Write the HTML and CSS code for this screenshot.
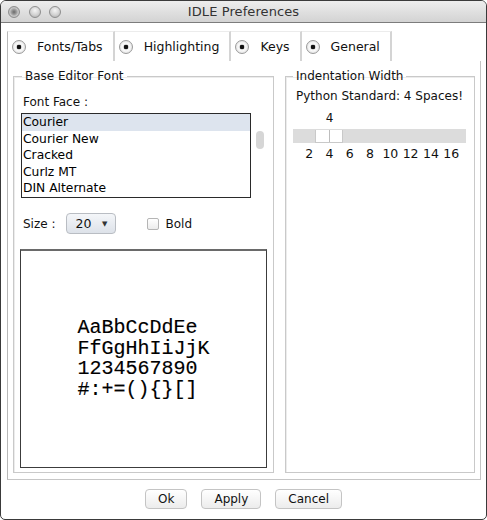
FILE: index.html
```html
<!DOCTYPE html>
<html>
<head>
<meta charset="utf-8">
<title>IDLE Preferences</title>
<link rel="stylesheet" href="styles.css">
</head>
<body>
<div class="window">
  <div class="titlebar">
    <div class="lights"><span class="light close"></span><span class="light"></span><span class="light"></span></div>
    <div class="title">IDLE Preferences</div>
    <div></div>
  </div>
  <div class="tabs">
    <div class="tab selected"><span class="radio"></span>Fonts/Tabs</div>
    <div class="tab"><span class="radio"></span>Highlighting</div>
    <div class="tab"><span class="radio"></span>Keys</div>
    <div class="tab"><span class="radio"></span>General</div>
  </div>
  <div class="panel">
    <fieldset class="group font-group">
      <legend>Base Editor Font</legend>
      <div class="label">Font Face :</div>
      <div class="list-wrap">
        <ul class="list">
          <li class="sel">Courier</li>
          <li>Courier New</li>
          <li>Cracked</li>
          <li>Curlz MT</li>
          <li>DIN Alternate</li>
        </ul>
        <div class="scroll-thumb"></div>
      </div>
      <div class="size-row">
        <span class="size-label">Size :</span>
        <div class="select"><span>20</span><span class="arrow">▼</span></div>
        <span class="check"></span><span class="check-label">Bold</span>
      </div>
      <div class="sample">
        <div class="sample-text">
          <div class="sample-line">AaBbCcDdEe</div>
          <div class="sample-line">FfGgHhIiJjK</div>
          <div class="sample-line">1234567890</div>
          <div class="sample-line">#:+=(){}[]</div>
        </div>
      </div>
    </fieldset>
    <fieldset class="group indent-group">
      <legend>Indentation Width</legend>
      <div class="note">Python Standard: 4 Spaces!</div>
      <div class="scale-grid value-row"><span class="value">4</span></div>
      <div class="track"><div class="thumb"></div></div>
      <div class="scale-grid ticks"><span>2</span><span>4</span><span>6</span><span>8</span><span>10</span><span>12</span><span>14</span><span>16</span></div>
    </fieldset>
  </div>
  <div class="buttons">
    <button class="btn">Ok</button>
    <button class="btn">Apply</button>
    <button class="btn">Cancel</button>
  </div>
</div>
</body>
</html>
```

FILE: styles.css
```css
* { box-sizing: border-box; }
html, body { margin: 0; padding: 0; background: #fff; }
body {
  font-family: "DejaVu Sans", "Liberation Sans", sans-serif;
  font-size: 12px;
  line-height: 14px;
  color: #111;
}
.window {
  width: 487px;
  height: 520px;
  border: 1px solid #3a3a3a;
  border-radius: 6px 6px 5px 5px;
  overflow: hidden;
  display: flex;
  flex-direction: column;
  background: #fff;
}
.titlebar {
  height: 22px;
  flex: none;
  display: grid;
  grid-template-columns: 1fr auto 1fr;
  align-items: center;
  background: linear-gradient(#ededed, #d3d3d3);
  border-bottom: 1px solid #7c7c7c;
}
.lights { display: flex; gap: 8.5px; padding-left: 7px; }
.light {
  width: 12px; height: 12px; border-radius: 50%;
  border: 1px solid #8e8e8e;
  background: radial-gradient(circle at 50% 35%, #f4f4f4 0%, #d2d2d2 55%, #a9a9a9 100%);
}
.light.close {
  background: radial-gradient(circle at 50% 50%, #6a6a6a 0%, #9a9a9a 35%, #c8c8c8 60%, #a0a0a0 100%);
}
.title { font-size: 13px; color: #333; letter-spacing: 0.1px; }

.tabs {
  flex: none;
  margin: 8px 0 0 6px;
  height: 30px;
  display: flex;
}
.tab {
  display: flex;
  align-items: center;
  gap: 11px;
  padding: 0 10px 0 4px;
  font-size: 12.5px;
  color: #111;
  border-right: 2px solid #d4d4d4;
  border-top: 1px solid #ececec;
  background: #fff;
}
.tab.selected { border-left: 1px solid #b8b8b8; }
.radio {
  width: 14px; height: 14px; border-radius: 50%;
  border: 1px solid #9a9a9a;
  background: radial-gradient(circle, #111 0 2px, #e6e6e6 2.6px, #fafafa 45%, #cfcfcf 100%);
  flex: none;
}

.panel {
  flex: none;
  margin: 0 5px 0 6px;
  padding: 8px 5px 6px 5px;
  border-left: 1px solid #b8b8b8;
  border-right: 1px solid #c4c4c4;
  border-bottom: 1px solid #c6c6c6;
  display: grid;
  grid-template-columns: 261px 190px;
  column-gap: 11px;
}
.group {
  margin: 0;
  min-width: 0;
  border: 1px solid #c9c9c9;
  box-shadow: inset 1px 1px 0 #ececec;
  padding: 0 6px 4px 6px;
}
.group legend {
  padding: 0 3px;
  font-size: 12px;
  line-height: 14px;
  color: #111;
}
.font-group legend { margin-left: 2px; }
.indent-group { padding: 0 7px 4px 7px; }

.label { margin: 12px 0 0 3px; }
.list-wrap { display: flex; margin-top: 4px; margin-left: 1px; }
.list {
  list-style: none;
  margin: 0;
  padding: 0;
  width: 230px;
  height: 85px;
  border: 1px solid #2a2a2a;
  overflow: hidden;
  background: #fff;
}
.list li { height: 16.6px; line-height: 16.6px; padding-left: 1px; font-size: 12.3px; color: #000; }
.list li.sel { background: #dde4ee; }
.scroll-thumb {
  width: 8px; height: 18px;
  margin: 18px 0 0 5px;
  border-radius: 4px;
  background: #d6d6d6;
}

.size-row {
  display: flex;
  align-items: center;
  margin: 15px 0 0 3px;
  height: 21px;
}
.select {
  margin-left: 10px;
  width: 50px; height: 21px;
  border: 1px solid #b9bdc3;
  border-radius: 4px;
  background: linear-gradient(#f4f6f9, #dde2e9);
  display: flex;
  align-items: center;
  justify-content: space-between;
  padding: 0 7px 0 9px;
  font-size: 12.5px;
}
.arrow { font-size: 7px; color: #333; }
.check {
  margin-left: 31px;
  width: 12px; height: 12px;
  border: 1px solid #b5b5b5;
  border-radius: 2px;
  background: linear-gradient(#fff, #ececec);
}
.check-label { margin-left: 7px; }

.sample {
  margin-top: 15px;
  height: 219px;
  border: 1px solid #3c3c3c;
  border-top: 2px solid #6a6a6a;
  display: flex;
  align-items: center;
  justify-content: center;
  background: #fff;
}
.sample-text {
  font-family: "Liberation Mono", "Courier New", monospace;
  font-size: 20px;
  color: #000;
  -webkit-text-stroke: 0.15px #000;
}
.sample-line { height: 20.5px; line-height: 20.5px; }

.note { margin: 6px 0 0 3px; }
.scale-grid {
  display: grid;
  grid-template-columns: repeat(8, 20.3px);
  margin-left: 6px;
  text-align: center;
}
.value-row { margin-top: 8px; }
.value { grid-column: 2; }
.track {
  margin-top: 4px;
  width: 173px;
  height: 14px;
  background: #dcdcdc;
  display: flex;
  align-items: flex-end;
}
.thumb {
  margin-left: 22px;
  width: 28px; height: 13px;
  border: 1px solid #c9c9c9;
  border-top: none;
  background: linear-gradient(to right, #fff 13px, #bdbdbd 13px, #bdbdbd 14px, #fff 14px);
}
.ticks { margin-top: 4px; font-size: 12.5px; }

.buttons {
  flex: 1;
  display: flex;
  justify-content: center;
  align-items: flex-start;
  gap: 14px;
  padding-top: 9px;
}
.btn {
  height: 20px;
  padding: 0 12px;
  font-family: "DejaVu Sans", "Liberation Sans", sans-serif;
  font-size: 12px;
  line-height: 18px;
  color: #111;
  border: 1px solid #c4c4c4;
  border-radius: 4px;
  background: linear-gradient(#ffffff, #ececec);
}
```
